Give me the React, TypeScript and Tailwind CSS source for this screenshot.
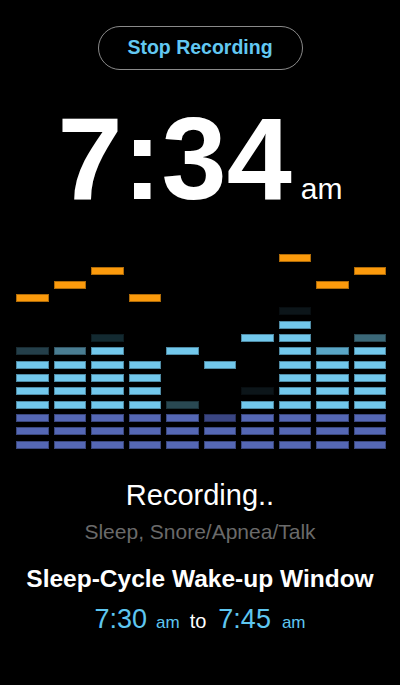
import React from "react";

type Cell = string | null;

const P = "#5568b5";
const L = "#72c8ec";
const O = "#fb9a0c";

const cols: Record<number, string>[] = [
  { 0: P, 1: P, 2: P, 3: L, 4: L, 5: L, 6: L, 7: "#243f4a", 11: O },
  { 0: P, 1: P, 2: P, 3: L, 4: L, 5: L, 6: L, 7: "#4a7d92", 12: O },
  { 0: P, 1: P, 2: P, 3: L, 4: L, 5: L, 6: L, 7: L, 8: "#132a31", 13: O },
  { 0: P, 1: P, 2: P, 3: L, 4: L, 5: L, 6: L, 11: O },
  { 0: P, 1: P, 2: P, 3: "#294852", 7: L },
  { 0: P, 1: P, 2: "#3a4683", 6: L },
  { 0: P, 1: P, 2: P, 3: L, 4: "#0c1519", 8: L },
  { 0: P, 1: P, 2: P, 3: L, 4: L, 5: L, 6: L, 7: L, 8: L, 9: L, 10: "#0c1519", 14: O },
  { 0: P, 1: P, 2: P, 3: L, 4: L, 5: L, 6: L, 7: "#5aa6c6", 12: O },
  { 0: P, 1: P, 2: P, 3: L, 4: L, 5: L, 6: L, 7: L, 8: "#3b6878", 13: O },
];

const ROWS = 15;

function Column({ data }: { data: Record<number, string> }) {
  const cells: Cell[] = [];
  for (let r = ROWS - 1; r >= 0; r--) cells.push(data[r] ?? null);
  return (
    <div className="flex flex-col gap-[5.33px]">
      {cells.map((c, i) => (
        <div
          key={i}
          className="h-[8px] w-full shadow-[inset_0_0_0_1px_rgba(0,0,0,0.3)]"
          style={{ backgroundColor: c ?? "transparent", boxShadow: c ? undefined : "none" }}
        />
      ))}
    </div>
  );
}

export default function App() {
  return (
    <div
      className="w-[400px] h-[685px] bg-black flex flex-col items-center overflow-hidden"
      style={{ fontFamily: '"Liberation Sans", Arial, sans-serif' }}
    >
      <div className="mt-[26px] w-[205px] h-[44px] rounded-full border border-[#8a8a8a] flex items-center justify-center">
        <span className="text-[19.5px] font-bold text-[#62c8f2] leading-none">Stop Recording</span>
      </div>

      <div className="mt-[30px] flex items-baseline text-white">
        <span className="text-[117px] font-bold leading-none tracking-[0px]">7:34</span>
        <span className="ml-[9px] text-[30px] leading-none">am</span>
      </div>

      <div className="mt-[37px] self-start ml-[16px] w-[370px] grid grid-cols-10 gap-x-[5px]">
        {cols.map((c, i) => (
          <Column key={i} data={c} />
        ))}
      </div>

      <div className="mt-[32px] text-white text-[29px] leading-none">Recording..</div>
      <div className="mt-[11px] text-[#6a6a6a] text-[21px] leading-none">Sleep, Snore/Apnea/Talk</div>

      <div className="mt-[25px] text-white text-[24.5px] font-bold leading-none">Sleep-Cycle Wake-up Window</div>

      <div className="mt-[15px] flex items-baseline leading-none">
        <span className="text-[#5ec6f0] text-[27px]">7:30</span>
        <span className="ml-[9px] text-[#5ec6f0] text-[17px]">am</span>
        <span className="ml-[10px] text-white text-[20px]">to</span>
        <span className="ml-[12px] text-[#5ec6f0] text-[27px]">7:45</span>
        <span className="ml-[11px] text-[#5ec6f0] text-[17px]">am</span>
      </div>
    </div>
  );
}
